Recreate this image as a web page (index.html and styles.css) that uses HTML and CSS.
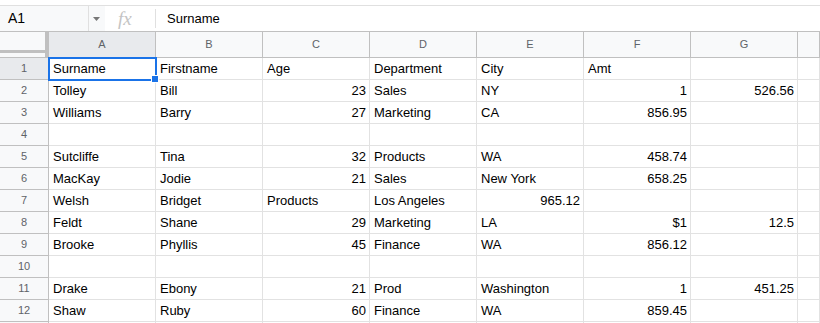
FILE: index.html
```html
<!DOCTYPE html>
<html lang="en">
<head>
  <meta charset="UTF-8">
  <title>Sheet</title>
  <link rel="stylesheet" href="styles.css">
</head>
<body>
<div class="barra">
  <div class="nombre">A1</div>
  <div class="flecha"><svg width="8" height="4" viewBox="0 0 8 4"><path d="M0 0h7L3.5 4z" fill="#777"/></svg></div>
  <div class="fx">fx</div>
  <div class="formula">Surname</div>
</div>

<div class="hoja">
  <div class="esquina"></div>
  <div class="col sel">A</div><div class="col">B</div><div class="col">C</div><div class="col">D</div><div class="col">E</div><div class="col">F</div><div class="col">G</div><div class="col"></div>

  <div class="fila sel">1</div>
  <div class="celda activa">Surname</div><div class="celda">Firstname</div><div class="celda">Age</div><div class="celda">Department</div><div class="celda">City</div><div class="celda">Amt</div><div class="celda"></div><div class="celda"></div>

  <div class="fila">2</div>
  <div class="celda">Tolley</div><div class="celda">Bill</div><div class="celda num">23</div><div class="celda">Sales</div><div class="celda">NY</div><div class="celda num">1</div><div class="celda num">526.56</div><div class="celda"></div>

  <div class="fila">3</div>
  <div class="celda">Williams</div><div class="celda">Barry</div><div class="celda num">27</div><div class="celda">Marketing</div><div class="celda">CA</div><div class="celda num">856.95</div><div class="celda"></div><div class="celda"></div>

  <div class="fila">4</div>
  <div class="celda"></div><div class="celda"></div><div class="celda"></div><div class="celda"></div><div class="celda"></div><div class="celda"></div><div class="celda"></div><div class="celda"></div>

  <div class="fila">5</div>
  <div class="celda">Sutcliffe</div><div class="celda">Tina</div><div class="celda num">32</div><div class="celda">Products</div><div class="celda">WA</div><div class="celda num">458.74</div><div class="celda"></div><div class="celda"></div>

  <div class="fila">6</div>
  <div class="celda">MacKay</div><div class="celda">Jodie</div><div class="celda num">21</div><div class="celda">Sales</div><div class="celda">New York</div><div class="celda num">658.25</div><div class="celda"></div><div class="celda"></div>

  <div class="fila">7</div>
  <div class="celda">Welsh</div><div class="celda">Bridget</div><div class="celda">Products</div><div class="celda">Los Angeles</div><div class="celda num">965.12</div><div class="celda"></div><div class="celda"></div><div class="celda"></div>

  <div class="fila">8</div>
  <div class="celda">Feldt</div><div class="celda">Shane</div><div class="celda num">29</div><div class="celda">Marketing</div><div class="celda">LA</div><div class="celda num">$1</div><div class="celda num">12.5</div><div class="celda"></div>

  <div class="fila">9</div>
  <div class="celda">Brooke</div><div class="celda">Phyllis</div><div class="celda num">45</div><div class="celda">Finance</div><div class="celda">WA</div><div class="celda num">856.12</div><div class="celda"></div><div class="celda"></div>

  <div class="fila">10</div>
  <div class="celda"></div><div class="celda"></div><div class="celda"></div><div class="celda"></div><div class="celda"></div><div class="celda"></div><div class="celda"></div><div class="celda"></div>

  <div class="fila">11</div>
  <div class="celda">Drake</div><div class="celda">Ebony</div><div class="celda num">21</div><div class="celda">Prod</div><div class="celda">Washington</div><div class="celda num">1</div><div class="celda num">451.25</div><div class="celda"></div>

  <div class="fila">12</div>
  <div class="celda">Shaw</div><div class="celda">Ruby</div><div class="celda num">60</div><div class="celda">Finance</div><div class="celda">WA</div><div class="celda num">859.45</div><div class="celda"></div><div class="celda"></div>

  <div class="fila"></div>
  <div class="celda"></div><div class="celda"></div><div class="celda"></div><div class="celda"></div><div class="celda"></div><div class="celda"></div><div class="celda"></div><div class="celda"></div>
</div>
</body>
</html>
```

FILE: styles.css
```css
body {
  margin: 0;
  padding: 0;
  font-family: "Liberation Sans", Arial, sans-serif;
  background: #fff;
  overflow: hidden;
}

.barra {
  margin-top: 5px;
  border-top: 1px solid #e0e0e0;
  height: 25px;
  display: flex;
  align-items: center;
  font-size: 13px;
  color: #000;
}

.nombre {
  width: 80px;
  height: 25px;
  line-height: 25px;
  padding-left: 8px;
  background: #f8f9fa;
  border-right: 1px solid #e0e0e0;
  font-size: 14px;
}

.flecha {
  width: 16px;
  height: 25px;
  display: flex;
  align-items: center;
  justify-content: center;
  background: #f8f9fa;
}

.fx {
  width: 51px;
  height: 19px;
  line-height: 19px;
  box-sizing: border-box;
  padding-left: 13px;
  font-family: "Liberation Serif", serif;
  font-style: italic;
  font-size: 19px;
  color: #c4c4c4;
  border-right: 1px solid #e0e0e0;
}

.formula {
  padding-left: 11px;
}

.hoja {
  display: grid;
  grid-template-columns: 49px repeat(7, 107px) 1fr;
  grid-template-rows: 26px;
  grid-auto-rows: 22px;
  border-top: 1px solid #c0c0c0;
  font-size: 13px;
}

.esquina {
  background:
    linear-gradient(#c0c0c0, #c0c0c0) left 0 bottom 4px / 100% 3px no-repeat,
    linear-gradient(#c0c0c0, #c0c0c0) right 0 top 0 / 3px 100% no-repeat,
    #f8f9fa;
  border-right: 1px solid #c0c0c0;
  border-bottom: 1px solid #c0c0c0;
}

.col {
  background: #f8f9fa;
  border-right: 1px solid #c0c0c0;
  border-bottom: 1px solid #c0c0c0;
  color: #5f6368;
  font-size: 11px;
  text-align: center;
  line-height: 25px;
}

.col.sel, .fila.sel {
  background: #e8eaed;
}

.fila {
  background: #f8f9fa;
  border-right: 1px solid #c0c0c0;
  border-bottom: 1px solid #c0c0c0;
  color: #5f6368;
  font-size: 11px;
  text-align: center;
  line-height: 21px;
}

.celda {
  border-right: 1px solid #e2e2e2;
  border-bottom: 1px solid #e2e2e2;
  padding: 0 3px 0 4px;
  line-height: 22px;
  white-space: nowrap;
  color: #000;
  position: relative;
}

.num {
  text-align: right;
}

.activa {
  outline: 2px solid #1a73e8;
  outline-offset: -1px;
  z-index: 1;
}

.activa::after {
  content: "";
  position: absolute;
  right: -4px;
  bottom: -4px;
  width: 6px;
  height: 6px;
  background: #1a73e8;
  border: 1px solid #fff;
}
```
